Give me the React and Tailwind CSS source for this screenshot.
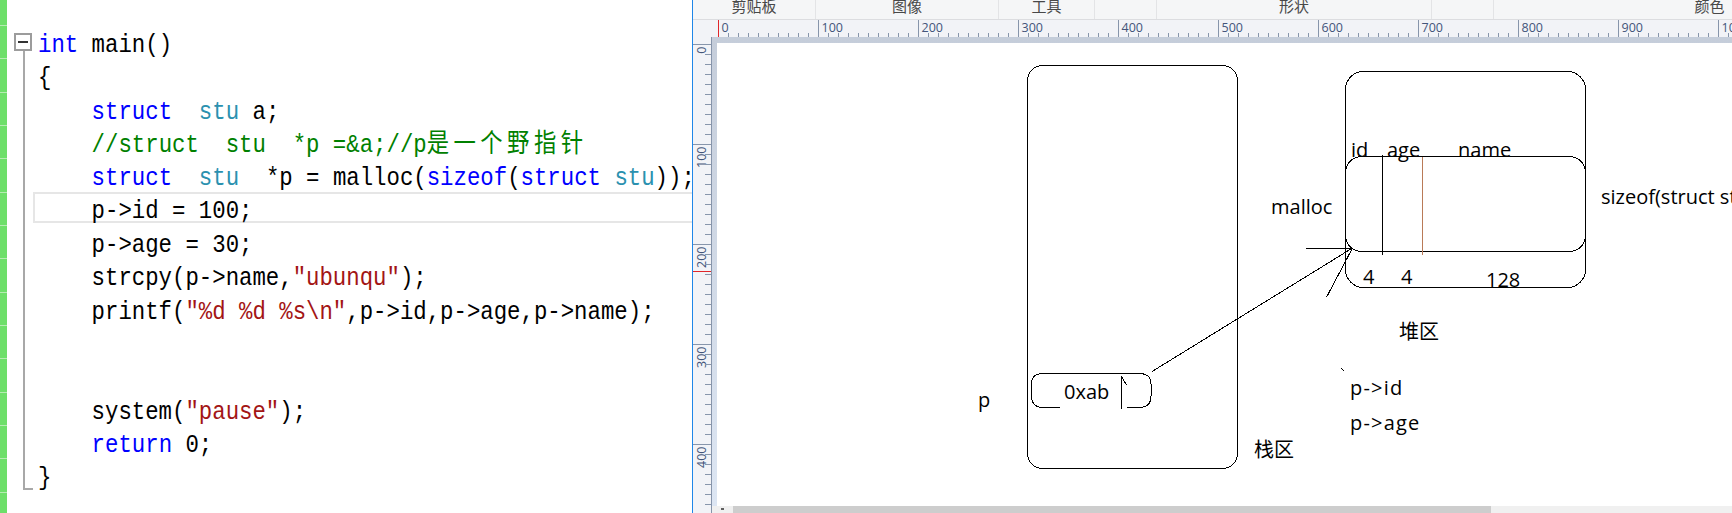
import React from "react";

// syntax colours (VS default theme)
const KW = "text-[#0000ff]";
const TY = "text-[#2b91af]";
const CM = "text-[#008000]";
const ST = "text-[#a31515]";

const codeLines = [
  [["int", KW], [" main()"]],
  [["{"]],
  [["    "], ["struct", KW], ["  "], ["stu", TY], [" a;"]],
  [["    "], ["//struct  stu  *p =&a;//p", CM], ["是一个野指针", CM, true]],
  [["    "], ["struct", KW], ["  "], ["stu", TY], ["  *p = malloc("], ["sizeof", KW], ["("], ["struct", KW], [" "], ["stu", TY], ["));"]],
  [["    p->id = 100;"]],
  [["    p->age = 30;"]],
  [["    strcpy(p->name,"], ['"ubunqu"', ST], [");"]],
  [["    printf("], ['"%d %d %s\\n"', ST], [",p->id,p->age,p->name);"]],
  [[""]],
  [[""]],
  [["    system("], ['"pause"', ST], [");"]],
  [["    "], ["return", KW], [" 0;"]],
  [["}"]],
];

function FoldCell({ index, last }) {
  if (index === 0) {
    return (
      <div className="flex w-[26px] shrink-0 flex-col">
        <div className="ml-[7px] mt-[8px] flex h-[18px] w-[18px] items-center justify-center border-2 border-[#9c9c9c] bg-white">
          <div className="h-[2px] w-[10px] bg-[#333]" />
        </div>
        <div className="ml-[16px] w-[2px] flex-1 bg-[#a8a8a8]" />
      </div>
    );
  }
  if (index === last) {
    return (
      <div className="w-[26px] shrink-0">
        <div className="ml-[16px] h-[32px] w-[10px] border-b-2 border-l-2 border-[#a8a8a8]" />
      </div>
    );
  }
  return (
    <div className="w-[26px] shrink-0">
      <div className="ml-[16px] h-full w-[2px] bg-[#a8a8a8]" />
    </div>
  );
}

function CodeLine({ parts }) {
  return (
    <span className="inline-block origin-left scale-x-[0.859] whitespace-pre">
      {parts.map(([text, color, cjk], i) =>
        cjk ? (
          <span
            key={i}
            className={`${color} font-['Noto_Sans_CJK_SC',sans-serif] text-[26px] leading-[0] tracking-[5.2px]`}
          >
            {text}
          </span>
        ) : (
          <span key={i} className={color || "text-black"}>
            {text}
          </span>
        )
      )}
    </span>
  );
}

function CodePanel() {
  const last = codeLines.length - 1;
  return (
    <div className="flex h-full w-[692px] shrink-0 overflow-hidden bg-white">
      <div className="w-[7px] shrink-0 bg-[#6ddf69] pt-[25px]">
        {Array.from({ length: 15 }).map((_, i) => (
          <div key={i} className="h-[33.33px] border-t border-[#b4ecb1]" />
        ))}
      </div>
      <div className="min-w-0 flex-1 pt-[25px] font-['Liberation_Mono',monospace] text-[26px] leading-[26px]">
        {codeLines.map((parts, i) => (
          <div key={i} className="flex h-[33.33px]">
            <FoldCell index={i} last={last} />
            {i === 5 ? (
              <div className="h-[31px] min-w-0 flex-1 whitespace-nowrap border-2 border-r-0 border-[#e6e6e6] pl-[3px] pt-[4.5px]">
                <CodeLine parts={parts} />
              </div>
            ) : (
              <div className="min-w-0 flex-1 whitespace-nowrap pl-[5px] pt-[7px]">
                <CodeLine parts={parts} />
              </div>
            )}
          </div>
        ))}
      </div>
    </div>
  );
}

function Ribbon() {
  return (
    <div className="flex h-[20px] shrink-0 overflow-hidden border-b border-[#dcdde0] bg-[#f5f6f7] font-['Noto_Sans_CJK_SC',sans-serif] text-[15px] leading-[15px] text-[#484848]">
      <div className="flex w-[123px] shrink-0 justify-center border-r border-[#e3e4e6]">
        <span className="-mt-[2px]">剪贴板</span>
      </div>
      <div className="flex w-[183px] shrink-0 justify-center border-r border-[#e3e4e6]">
        <span className="-mt-[2px]">图像</span>
      </div>
      <div className="flex w-[96px] shrink-0 justify-center border-r border-[#e3e4e6]">
        <span className="-mt-[2px]">工具</span>
      </div>
      <div className="w-[62px] shrink-0 border-r border-[#e3e4e6]" />
      <div className="flex w-[275px] shrink-0 justify-center border-r border-[#e3e4e6]">
        <span className="-mt-[2px]">形状</span>
      </div>
      <div className="w-[62px] shrink-0 border-r border-[#e3e4e6]" />
      <div className="flex w-[431px] shrink-0 justify-center">
        <span className="-mt-[2px]">颜色</span>
      </div>
    </div>
  );
}

function HRuler() {
  const items = [];
  for (let k = 0; 25 + k * 10 <= 1040; k++) {
    const x = 25 + k * 10 + 0.5;
    const major = k % 10 === 0;
    items.push(<line key={"t" + k} x1={x} x2={x} y1={major ? 0 : 13} y2={17} stroke="#8795ab" />);
    if (major) {
      items.push(
        <text key={"l" + k} x={x + 3} y={11.7} fontSize="12.5" fill="#44557a" fontFamily="Open Sans, sans-serif">
          {k * 10}
        </text>
      );
    }
  }
  return (
    <div className="h-[17px] shrink-0 bg-[#f2f3f7]">
      <svg width="1039" height="17" shapeRendering="crispEdges">
        {items}
        <line x1="25" x2="25" y1="0" y2="17" stroke="#e0262b" />
      </svg>
    </div>
  );
}

function VRuler() {
  const items = [];
  for (let k = 0; 7 + k * 10 <= 476; k++) {
    const y = 7 + k * 10 + 0.5;
    const major = k % 10 === 0;
    items.push(<line key={"t" + k} x1={major ? 0 : 12} x2={18} y1={y} y2={y} stroke="#8795ab" />);
    if (major) {
      items.push(
        <text
          key={"l" + k}
          transform={`translate(12.5, ${y + 2}) rotate(-90)`}
          textAnchor="end"
          fontSize="12.5"
          fill="#44557a"
          fontFamily="Open Sans, sans-serif"
        >
          {k * 10}
        </text>
      );
    }
  }
  return (
    <div className="w-[19px] shrink-0 bg-[#f2f3f7]">
      <svg width="19" height="476" shapeRendering="crispEdges">
        {items}
        <line x1="18.5" x2="18.5" y1="0" y2="476" stroke="#8795ab" />
        <line x1="0" x2="18" y1="234.5" y2="234.5" stroke="#e0262b" />
      </svg>
    </div>
  );
}

function Drawing() {
  return (
    <div className="relative flex-1 overflow-hidden bg-white font-['Open_Sans','Noto_Sans_CJK_SC',sans-serif] text-[20px] leading-[20px] text-black">
      <svg className="absolute left-0 top-0" width="1015" height="463" fill="none" stroke="#000" strokeWidth="1" shapeRendering="crispEdges">
        {/* stack */}
        <rect x="310.5" y="22.5" width="210" height="403" rx="15" />
        {/* heap */}
        <rect x="628.5" y="28.5" width="240" height="216" rx="18" />
        <rect x="628.5" y="113.5" width="240" height="95" rx="16" />
        <line x1="665.5" y1="112" x2="665.5" y2="212" />
        <line x1="705.5" y1="114" x2="705.5" y2="212" stroke="#b97a57" />
        {/* arrow */}
        <line x1="589" y1="205.5" x2="635" y2="205.5" />
        <line x1="434.7" y1="328.7" x2="635.5" y2="205" />
        <line x1="609.8" y1="253.7" x2="635.5" y2="205" />
        <line x1="624.7" y1="325.3" x2="626.5" y2="328" />
        {/* pointer cell */}
        <path d="M343 364.5 H326.5 Q314.5 364.5 314.5 353 V341 Q314.5 330.5 326.5 330.5 H422 Q434 330.5 434 341 V353 Q434 364.5 422 364.5 H409.5" />
        <line x1="404.5" y1="333" x2="404.5" y2="366" />
        <line x1="404.5" y1="333.5" x2="409.5" y2="342" />
      </svg>
      <span className="absolute left-[634px] top-[97px]">id</span>
      <span className="absolute left-[670px] top-[97px]">age</span>
      <span className="absolute left-[741px] top-[97px]">name</span>
      <span className="absolute left-[554px] top-[154px]">malloc</span>
      <span className="absolute left-[884px] top-[144px] whitespace-nowrap">sizeof(struct stu)</span>
      <span className="absolute left-[646px] top-[224px]">4</span>
      <span className="absolute left-[684px] top-[224px]">4</span>
      <span className="absolute left-[769px] top-[227px]">128</span>
      <span className="absolute left-[682px] top-[279px]">堆区</span>
      <span className="absolute left-[347px] top-[339px]">0xab</span>
      <span className="absolute left-[261px] top-[347px]">p</span>
      <span className="absolute left-[537px] top-[397px]">栈区</span>
      <span className="absolute left-[633px] top-[335px] tracking-[1.2px]">p-&gt;id</span>
      <span className="absolute left-[633px] top-[370px] tracking-[1.2px]">p-&gt;age</span>
    </div>
  );
}

function PaintPanel() {
  return (
    <div className="flex h-full min-w-0 flex-1 flex-col">
      <Ribbon />
      <HRuler />
      <div className="flex min-h-0 flex-1">
        <VRuler />
        <div className="flex min-w-0 flex-1 flex-col">
          <div className="flex min-h-0 flex-1 bg-linear-to-b from-[#c5cdda] to-[#dde6f3] pl-[5px] pt-[6px]">
            <Drawing />
          </div>
          <div className="flex h-[7px] shrink-0 bg-[#f0f0f0]">
            <div className="flex w-[21px] shrink-0 justify-center pt-[2px]">
              <div className="h-[2px] w-[3px] bg-[#606060]" />
            </div>
            <div className="w-[758px] shrink-0 bg-[#cdcdcd]" />
          </div>
        </div>
      </div>
    </div>
  );
}

export default function App() {
  return (
    <div className="flex h-[513px] w-[1732px] overflow-hidden bg-white">
      <CodePanel />
      <div className="w-px shrink-0 bg-[#1f86e8]" />
      <PaintPanel />
    </div>
  );
}
